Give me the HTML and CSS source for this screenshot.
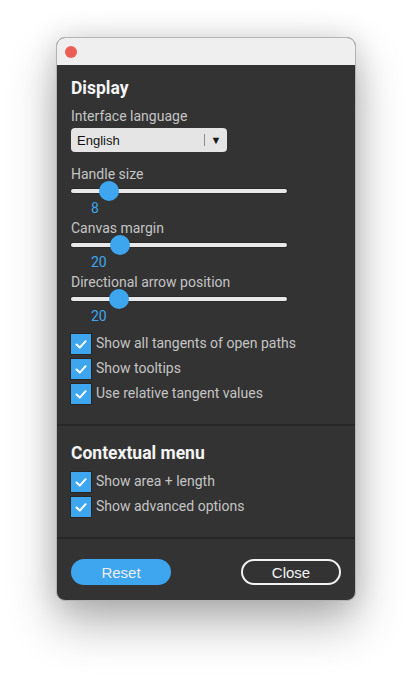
FILE: index.html
```html
<!DOCTYPE html>
<html lang="en">

<head>
    <meta charset="UTF-8">
    <meta name="viewport" content="width=device-width, initial-scale=1.0">
    <title>Settings</title>
    <link rel="stylesheet" href="styles.css">
</head>

<body>
    <div class="window">
        <div class="titlebar">
            <span class="traffic-dot"></span>
        </div>

        <section class="section">
            <h2 class="section-title">Display</h2>
            <div class="field-label">Interface language</div>
            <div class="select">
                <span class="select-value">English</span>
                <span class="select-sep"></span>
                <span class="select-arrow">&#9660;</span>
            </div>

            <div class="slider-group first">
                <div class="slider-label">Handle size</div>
                <div class="slider">
                    <div class="slider-track"></div>
                    <div class="slider-thumb" style="left: 28px"></div>
                </div>
                <div class="slider-value">8</div>
            </div>
            <div class="slider-group">
                <div class="slider-label">Canvas margin</div>
                <div class="slider">
                    <div class="slider-track"></div>
                    <div class="slider-thumb" style="left: 39px"></div>
                </div>
                <div class="slider-value">20</div>
            </div>
            <div class="slider-group">
                <div class="slider-label">Directional arrow position</div>
                <div class="slider">
                    <div class="slider-track"></div>
                    <div class="slider-thumb" style="left: 38px"></div>
                </div>
                <div class="slider-value">20</div>
            </div>

            <ul class="checks">
                <li class="check">
                    <span class="check-box"><svg viewBox="0 0 20 20" width="20" height="20"><path d="M5.5 10.5 L8.8 13.6 L14.6 7.2" /></svg></span>
                    <span class="check-text">Show all tangents of open paths</span>
                </li>
                <li class="check">
                    <span class="check-box"><svg viewBox="0 0 20 20" width="20" height="20"><path d="M5.5 10.5 L8.8 13.6 L14.6 7.2" /></svg></span>
                    <span class="check-text">Show tooltips</span>
                </li>
                <li class="check">
                    <span class="check-box"><svg viewBox="0 0 20 20" width="20" height="20"><path d="M5.5 10.5 L8.8 13.6 L14.6 7.2" /></svg></span>
                    <span class="check-text">Use relative tangent values</span>
                </li>
            </ul>
        </section>

        <section class="section second">
            <h2 class="section-title">Contextual menu</h2>
            <ul class="checks tight">
                <li class="check">
                    <span class="check-box"><svg viewBox="0 0 20 20" width="20" height="20"><path d="M5.5 10.5 L8.8 13.6 L14.6 7.2" /></svg></span>
                    <span class="check-text">Show area + length</span>
                </li>
                <li class="check">
                    <span class="check-box"><svg viewBox="0 0 20 20" width="20" height="20"><path d="M5.5 10.5 L8.8 13.6 L14.6 7.2" /></svg></span>
                    <span class="check-text">Show advanced options</span>
                </li>
            </ul>
        </section>

        <div class="actions">
            <button class="btn btn-primary">Reset</button>
            <button class="btn btn-outline">Close</button>
        </div>
    </div>
</body>

</html>
```

FILE: styles.css
```css
html {
    background: #ffffff;
}

body {
    margin: 0;
    padding: 37px 0 0 56px;
    min-height: 675px;
    box-sizing: border-box;
    background: #ffffff;
    font-family: Roboto, "Liberation Sans", sans-serif;
}

.window {
    box-sizing: border-box;
    width: 300px;
    border: 1px solid #b4b4b4;
    border-radius: 9px;
    overflow: hidden;
    background: #333333;
    box-shadow: 0 22px 48px rgba(0, 0, 0, 0.3), 0 0 28px rgba(0, 0, 0, 0.12);
}

.titlebar {
    height: 27px;
    background: #efefef;
    display: flex;
    align-items: center;
    padding-left: 8px;
}

.traffic-dot {
    width: 12px;
    height: 12px;
    border-radius: 50%;
    background: #ec5f57;
    margin-top: 1px;
}

.section {
    padding: 13px 14px 20px;
    border-bottom: 2px solid #272727;
}

.section.second {
    padding-top: 17px;
}

.section-title {
    margin: 0;
    font-size: 17.5px;
    line-height: 20px;
    font-weight: 700;
    color: #f4f4f4;
}

.field-label {
    margin-top: 9px;
    font-size: 14px;
    line-height: 18px;
    color: #c4c4c4;
}

.select {
    margin-top: 3px;
    width: 156px;
    height: 24px;
    box-sizing: border-box;
    background: #e5e5e5;
    border-radius: 4px;
    display: flex;
    align-items: center;
    padding-left: 6px;
    font-family: "Liberation Sans", Arial, sans-serif;
    font-size: 13px;
    color: #111111;
}

.select-value {
    flex: 1;
}

.select-sep {
    width: 1px;
    height: 12px;
    background: #8c8c8c;
}

.select-arrow {
    width: 22px;
    text-align: center;
    font-size: 11px;
    color: #1a1a1a;
}

.slider-group {
    margin-top: 6px;
}

.slider-group.first {
    margin-top: 15px;
}

.slider-label {
    font-size: 14px;
    line-height: 14px;
    color: #c4c4c4;
}

.slider {
    position: relative;
    width: 216px;
    height: 20px;
    display: flex;
    align-items: center;
}

.slider-track {
    width: 100%;
    height: 4px;
    background: #e9e9e9;
    border-radius: 2px;
    box-shadow: 0 0 0 1px #2a2a2a;
}

.slider-thumb {
    position: absolute;
    top: 0;
    width: 20px;
    height: 20px;
    border-radius: 50%;
    background: #3ea6ef;
}

.slider-value {
    padding-left: 20px;
    font-size: 14px;
    line-height: 14px;
    color: #3ea6ef;
}

.checks {
    list-style: none;
    margin: 11px 0 0;
    padding: 0;
    display: flex;
    flex-direction: column;
    gap: 5px;
}

.checks.tight {
    margin-top: 9px;
}

.check {
    display: flex;
    align-items: center;
    height: 20px;
}

.check-box {
    width: 20px;
    height: 20px;
    background: #3ea6ef;
    box-shadow: 0 0 0 1px #262626;
}

.check-box svg {
    display: block;
    fill: none;
    stroke: #ffffff;
    stroke-width: 2;
    stroke-linecap: round;
    stroke-linejoin: round;
}

.check-text {
    margin-left: 5px;
    font-size: 14px;
    color: #c4c4c4;
    margin-top: -3px;
}

.actions {
    display: flex;
    justify-content: space-between;
    padding: 20px 14px 15px;
}

.btn {
    box-sizing: border-box;
    width: 100px;
    height: 26px;
    border-radius: 13px;
    font-family: "Liberation Sans", Arial, sans-serif;
    font-size: 15px;
    padding: 0;
    cursor: pointer;
}

.btn-primary {
    background: #3ea6ef;
    border: none;
    color: #eeeeee;
}

.btn-outline {
    background: transparent;
    border: 2px solid #f2f2f2;
    color: #f4f4f4;
}
```
